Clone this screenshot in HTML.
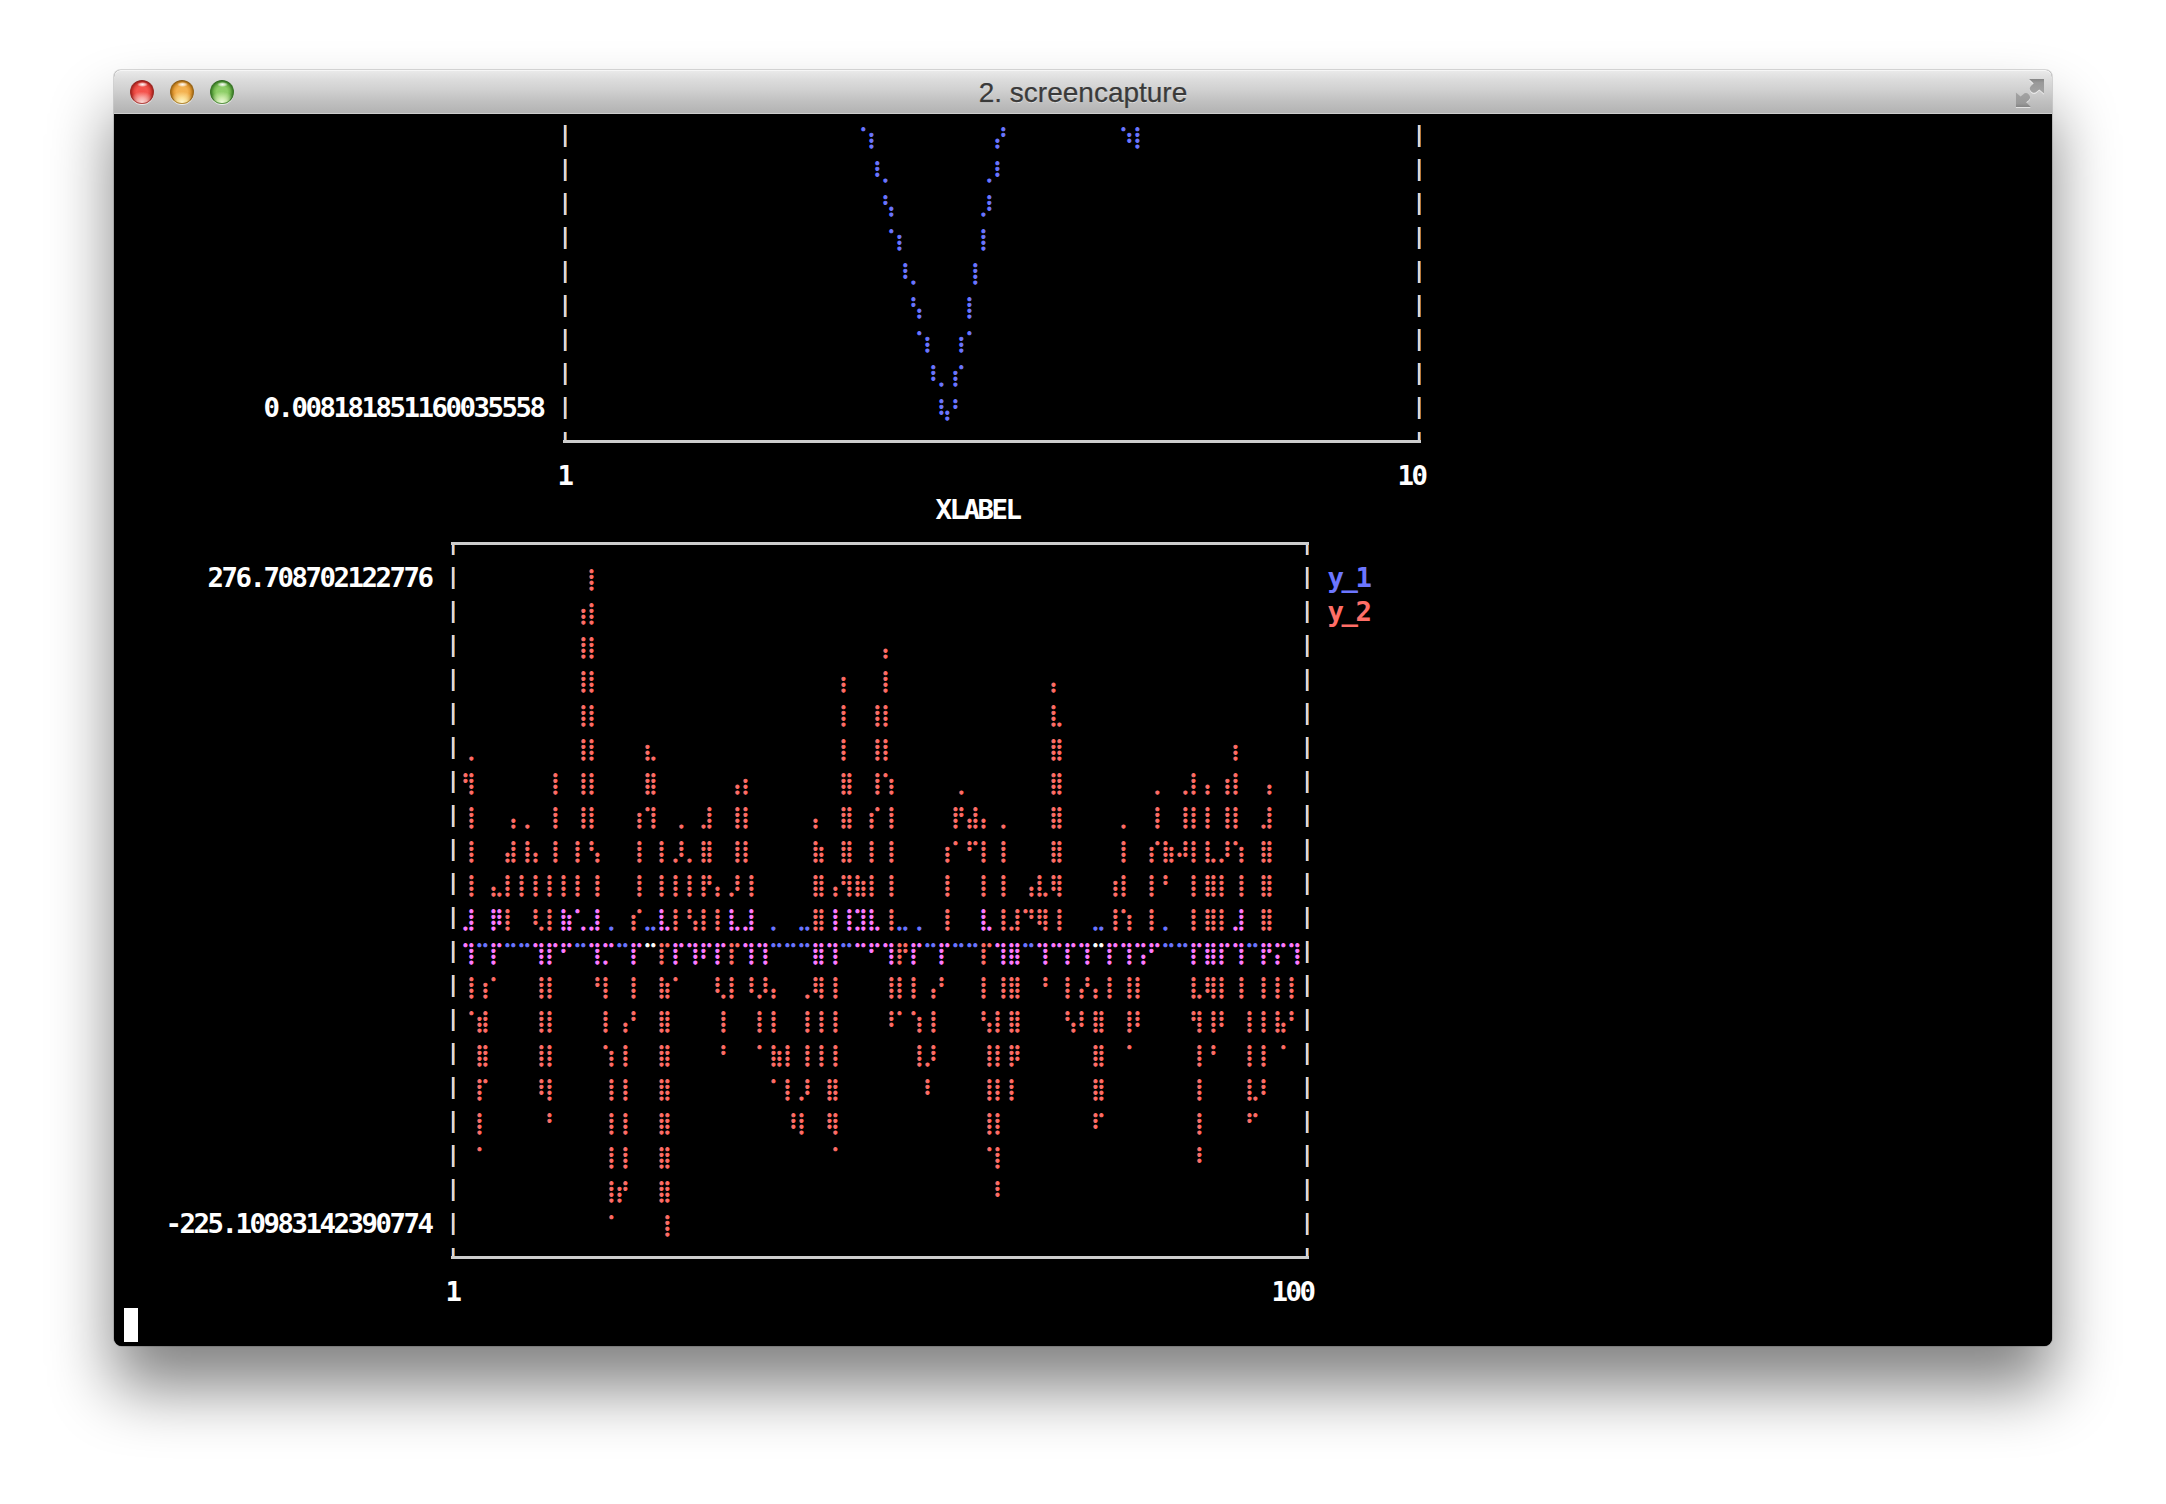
<!DOCTYPE html>
<html lang="en"><head><meta charset="utf-8"><title>2. screencapture</title>
<style>
html,body{margin:0;padding:0;background:#fff;}
body{width:2166px;height:1504px;position:relative;overflow:hidden;}
#win{position:absolute;left:114px;top:70px;width:1938px;height:1276px;border-radius:7px 7px 8px 8px;
 box-shadow:0 0 0 1px rgba(0,0,0,.14),0 42px 64px rgba(0,0,0,.49);background:#000;}
#bar{position:absolute;left:0;top:0;width:1938px;height:44px;border-radius:7px 7px 0 0;
 background:linear-gradient(#ebebeb 0,#e4e4e4 10%,#dcdcdc 22%,#d0d0d0 46%,#c1c1c1 70%,#b5b5b5 93%,#b3b3b3 97.6%,#cecece 97.8%,#cecece 100%);box-shadow:inset 0 1px 0 #f6f6f6;}
#title{position:absolute;left:0;top:0.6px;width:1938px;height:44px;line-height:44px;text-align:center;
 font-family:"Liberation Sans",sans-serif;font-size:28px;color:#3a3a3a;-webkit-text-stroke:0.25px #3a3a3a;text-shadow:0 1px 0 rgba(255,255,255,.55);}
.tl{position:absolute;top:10px;width:24px;height:24px;border-radius:50%;box-sizing:border-box;box-shadow:0 1px 0.5px rgba(255,255,255,.7);border:1px solid #000;background-clip:padding-box;}
.tl:after{content:"";position:absolute;left:5.5px;top:1px;width:11px;height:5px;border-radius:50%;background:radial-gradient(ellipse closest-side at 50% 50%,rgba(255,255,255,.95) 0,rgba(255,255,255,.6) 50%,rgba(255,255,255,0) 100%);}
#tl1{left:16px;border-color:#8f211c #9d2a25 #b44540;background:radial-gradient(ellipse 58% 48% at 50% 96%,#fbd6d4 0,rgba(251,196,192,.8) 40%,rgba(248,120,112,0) 100%),radial-gradient(circle closest-side at 50% 50%,#f5524b 0,#f4564f 50%,#e3453e 74%,#bd2d27 92%,#a3231e 100%);}
#tl2{left:56px;border-color:#8c5a12 #9a661a #b58a34;background:radial-gradient(ellipse 58% 48% at 50% 96%,#fff6cc 0,rgba(254,234,166,.85) 40%,rgba(250,190,90,0) 100%),radial-gradient(circle closest-side at 50% 50%,#f4b352 0,#f3b150 50%,#e49c38 74%,#bd7c1e 92%,#a36a16 100%);}
#tl3{left:96px;border-color:#2f6a1f #3a7628 #5a9645;background:radial-gradient(ellipse 58% 48% at 50% 96%,#eefbdc 0,rgba(216,243,184,.85) 40%,rgba(150,210,110,0) 100%),radial-gradient(circle closest-side at 50% 50%,#90d06a 0,#8dcd67 50%,#72b64e 74%,#4a8e32 92%,#3c7c28 100%);}
#term{position:absolute;left:0;top:44px;width:1938px;height:1232px;background:#000;border-radius:0 0 8px 8px;overflow:hidden;}
.t{position:absolute;height:34px;line-height:34px;white-space:pre;color:#fff;font-family:"DejaVu Sans Mono","Liberation Mono",monospace;font-weight:bold;font-size:27.4px;letter-spacing:-2.49px;margin-left:-0.4px;margin-top:0.5px;}
.hl{position:absolute;height:3px;background:#cdcdcd;}
.vl{position:absolute;width:2px;background:#d6dada;box-shadow:-1px 0 0 #0b2b60,1px 0 0 #b9793a;}
</style></head><body>
<div id="win">
<div id="bar"></div>
<div class="tl" id="tl1"></div>
<div class="tl" id="tl2"></div>
<div class="tl" id="tl3"></div>
<div id="title">2. screencapture</div>
<div id="term">
<div class="t" style="left:150px;top:276px;">0.008181851160035558</div>
<div class="t" style="left:444px;top:344px;">1</div>
<div class="t" style="left:1284px;top:344px;">10</div>
<div class="t" style="left:822px;top:378px;">XLABEL</div>
<div class="t" style="left:94px;top:446px;">276.708702122776</div>
<div class="t" style="left:1214px;top:446px;color:#6c76ff;">y_1</div>
<div class="t" style="left:1214px;top:480px;color:#ff6e67;">y_2</div>
<div class="t" style="left:52px;top:1092px;">-225.10983142390774</div>
<div class="t" style="left:332px;top:1160px;">1</div>
<div class="t" style="left:1158px;top:1160px;">100</div>
<div class="vl" style="left:450px;top:317.7px;height:11.3px"></div><div class="vl" style="left:1304px;top:317.7px;height:11.3px"></div><div class="hl" style="left:449px;top:326px;width:858px"></div><div class="vl" style="left:450px;top:11px;height:21.8px"></div><div class="vl" style="left:1304px;top:11px;height:21.8px"></div><div class="vl" style="left:450px;top:45px;height:21.8px"></div><div class="vl" style="left:1304px;top:45px;height:21.8px"></div><div class="vl" style="left:450px;top:79px;height:21.8px"></div><div class="vl" style="left:1304px;top:79px;height:21.8px"></div><div class="vl" style="left:450px;top:113px;height:21.8px"></div><div class="vl" style="left:1304px;top:113px;height:21.8px"></div><div class="vl" style="left:450px;top:147px;height:21.8px"></div><div class="vl" style="left:1304px;top:147px;height:21.8px"></div><div class="vl" style="left:450px;top:181px;height:21.8px"></div><div class="vl" style="left:1304px;top:181px;height:21.8px"></div><div class="vl" style="left:450px;top:215px;height:21.8px"></div><div class="vl" style="left:1304px;top:215px;height:21.8px"></div><div class="vl" style="left:450px;top:249px;height:21.8px"></div><div class="vl" style="left:1304px;top:249px;height:21.8px"></div><div class="vl" style="left:450px;top:283px;height:21.8px"></div><div class="vl" style="left:1304px;top:283px;height:21.8px"></div>
<div class="vl" style="left:338px;top:428px;height:13px"></div><div class="vl" style="left:1192px;top:428px;height:13px"></div><div class="hl" style="left:337px;top:428px;width:858px"></div><div class="vl" style="left:338px;top:1133.7px;height:11.3px"></div><div class="vl" style="left:1192px;top:1133.7px;height:11.3px"></div><div class="hl" style="left:337px;top:1142px;width:858px"></div><div class="vl" style="left:338px;top:453px;height:21.8px"></div><div class="vl" style="left:1192px;top:453px;height:21.8px"></div><div class="vl" style="left:338px;top:487px;height:21.8px"></div><div class="vl" style="left:1192px;top:487px;height:21.8px"></div><div class="vl" style="left:338px;top:521px;height:21.8px"></div><div class="vl" style="left:1192px;top:521px;height:21.8px"></div><div class="vl" style="left:338px;top:555px;height:21.8px"></div><div class="vl" style="left:1192px;top:555px;height:21.8px"></div><div class="vl" style="left:338px;top:589px;height:21.8px"></div><div class="vl" style="left:1192px;top:589px;height:21.8px"></div><div class="vl" style="left:338px;top:623px;height:21.8px"></div><div class="vl" style="left:1192px;top:623px;height:21.8px"></div><div class="vl" style="left:338px;top:657px;height:21.8px"></div><div class="vl" style="left:1192px;top:657px;height:21.8px"></div><div class="vl" style="left:338px;top:691px;height:21.8px"></div><div class="vl" style="left:1192px;top:691px;height:21.8px"></div><div class="vl" style="left:338px;top:725px;height:21.8px"></div><div class="vl" style="left:1192px;top:725px;height:21.8px"></div><div class="vl" style="left:338px;top:759px;height:21.8px"></div><div class="vl" style="left:1192px;top:759px;height:21.8px"></div><div class="vl" style="left:338px;top:793px;height:21.8px"></div><div class="vl" style="left:1192px;top:793px;height:21.8px"></div><div class="vl" style="left:338px;top:827px;height:21.8px"></div><div class="vl" style="left:1192px;top:827px;height:21.8px"></div><div class="vl" style="left:338px;top:861px;height:21.8px"></div><div class="vl" style="left:1192px;top:861px;height:21.8px"></div><div class="vl" style="left:338px;top:895px;height:21.8px"></div><div class="vl" style="left:1192px;top:895px;height:21.8px"></div><div class="vl" style="left:338px;top:929px;height:21.8px"></div><div class="vl" style="left:1192px;top:929px;height:21.8px"></div><div class="vl" style="left:338px;top:963px;height:21.8px"></div><div class="vl" style="left:1192px;top:963px;height:21.8px"></div><div class="vl" style="left:338px;top:997px;height:21.8px"></div><div class="vl" style="left:1192px;top:997px;height:21.8px"></div><div class="vl" style="left:338px;top:1031px;height:21.8px"></div><div class="vl" style="left:1192px;top:1031px;height:21.8px"></div><div class="vl" style="left:338px;top:1065px;height:21.8px"></div><div class="vl" style="left:1192px;top:1065px;height:21.8px"></div><div class="vl" style="left:338px;top:1099px;height:21.8px"></div><div class="vl" style="left:1192px;top:1099px;height:21.8px"></div>
<svg id="plots" width="1938" height="1232" style="position:absolute;left:0;top:0" font-family="DejaVu Serif, DejaVu Sans, serif" font-size="20" stroke-width="0.9" stroke-linejoin="round"><g transform="scale(1.005,1.052)">
<text x="735.32 749.25 874.63 1000.00 1013.93" y="28.61" fill="#6c76ff" stroke="#6c76ff">⠈⡆⡜⠱⡇</text>
<text x="749.25 763.18 860.70 874.63" y="60.93" fill="#6c76ff" stroke="#6c76ff">⠸⡀⢀⠇</text>
<text x="763.18 860.70" y="93.25" fill="#6c76ff" stroke="#6c76ff">⢣⡸</text>
<text x="763.18 777.11 860.70" y="125.57" fill="#6c76ff" stroke="#6c76ff">⠈⡆⡇</text>
<text x="777.11 791.04 846.77" y="157.89" fill="#6c76ff" stroke="#6c76ff">⠸⡀⢸</text>
<text x="791.04 846.77" y="190.21" fill="#6c76ff" stroke="#6c76ff">⢣⡇</text>
<text x="791.04 804.98 832.84 846.77" y="222.53" fill="#6c76ff" stroke="#6c76ff">⠈⡆⢰⠁</text>
<text x="804.98 818.91 832.84" y="254.85" fill="#6c76ff" stroke="#6c76ff">⠸⡀⡎</text>
<text x="818.91 832.84" y="287.17" fill="#6c76ff" stroke="#6c76ff">⢧⠃</text>
<text x="470.65" y="448.76" fill="#ff6e67" stroke="#ff6e67">⡇</text>
<text x="456.72 470.65" y="481.08" fill="#ff6e67" stroke="#ff6e67">⢰⡇</text>
<text x="456.72 470.65 763.18" y="513.40" fill="#ff6e67" stroke="#ff6e67">⢸⡇⡄</text>
<text x="456.72 470.65 721.39 763.18 930.35" y="545.72" fill="#ff6e67" stroke="#ff6e67">⢸⡇⡆⡇⡄</text>
<text x="456.72 470.65 721.39 749.25 763.18 930.35" y="578.04" fill="#ff6e67" stroke="#ff6e67">⢸⡇⡇⢸⡇⣇</text>
<text x="345.27 456.72 470.65 526.37 721.39 749.25 763.18 930.35 1111.44" y="610.36" fill="#ff6e67" stroke="#ff6e67">⢀⢸⡇⣆⡇⢸⡇⣿⡆</text>
<text x="345.27 428.86 456.72 470.65 526.37 609.95 623.88 721.39 749.25 763.18 832.84 930.35 1027.86 1055.72 1069.65 1083.58 1097.51 1111.44 1139.30" y="642.68" fill="#ff6e67" stroke="#ff6e67">⢻⢸⢸⡇⣿⢠⡆⣿⢸⢱⢀⣿⢀⢀⡇⡄⢰⡇⢠</text>
<text x="345.27 387.06 401.00 428.86 456.72 470.65 512.44 526.37 554.23 582.09 609.95 623.88 693.53 721.39 749.25 763.18 832.84 846.77 860.70 874.63 930.35 1000.00 1027.86 1055.72 1069.65 1083.58 1097.51 1111.44 1139.30" y="675.00" fill="#ff6e67" stroke="#ff6e67">⢸⢠⢀⢸⢸⡇⢰⢹⢀⣸⢸⡇⡄⣿⡎⢸⡟⣼⡄⢀⣿⡀⢸⢸⡇⡇⢸⡇⣸</text>
<text x="345.27 387.06 401.00 414.93 428.86 456.72 470.65 512.44 540.30 554.23 568.16 582.09 609.95 623.88 693.53 721.39 749.25 763.18 818.91 832.84 846.77 860.70 874.63 930.35 1000.00 1027.86 1041.79 1055.72 1069.65 1083.58 1097.51 1111.44 1139.30" y="707.32" fill="#ff6e67" stroke="#ff6e67">⢸⣼⢸⡄⢸⡇⢣⢸⡇⡸⡀⣿⢸⡇⣷⣿⡇⢸⢰⠁⠋⡇⢸⣿⡇⡎⣷⠼⡇⣇⡸⢱⣿</text>
<text x="345.27 373.13 387.06 401.00 414.93 428.86 442.79 456.72 470.65 512.44 540.30 554.23 568.16 582.09 596.02 609.95 623.88 693.53 707.46 721.39 735.32 749.25 763.18 818.91 860.70 874.63 902.49 916.42 930.35 986.07 1000.00 1027.86 1041.79 1069.65 1083.58 1097.51 1111.44 1139.30" y="739.64" fill="#ff6e67" stroke="#ff6e67">⢸⣄⡇⡇⡇⡇⡇⡇⢸⢸⡇⡇⡇⡟⡄⡸⢸⣿⢠⢻⣷⡇⢸⢸⡇⢸⢠⣇⢿⢰⡇⡇⠃⡇⣿⡇⢸⣿</text>
<text x="484.58 526.37 651.74 679.60 777.11 791.04 972.14 1041.79" y="771.96" fill="#6c76ff" stroke="#6c76ff">⢀⣀⡀⣀⣀⢀⣀⡀</text>
<text x="345.27 373.13 442.79 456.72 470.65 540.30 609.95 623.88 707.46 721.39 735.32 749.25 860.70 1111.44" y="771.96" fill="#ff7cff" stroke="#ff7cff">⣸⡿⣷⢁⣸⣇⣇⣸⢸⢸⣹⣇⣇⣸</text>
<text x="387.06 414.93 428.86 512.44 554.23 568.16 582.09 596.02 693.53 763.18 818.91 874.63 888.56 902.49 916.42 930.35 986.07 1000.00 1027.86 1069.65 1083.58 1097.51 1139.30" y="771.96" fill="#ff6e67" stroke="#ff6e67">⡇⢇⡇⡎⡇⢣⡇⡇⣿⢸⢸⢸⣸⠙⢿⢸⢸⢱⡇⡇⣿⡇⣿</text>
<text x="359.20 387.06 401.00 456.72 498.51 651.74 665.67 679.60 721.39 804.98 832.84 846.77 902.49 1041.79 1055.72 1125.37" y="804.28" fill="#6c76ff" stroke="#6c76ff">⠉⠉⠉⠉⠉⠉⠉⠉⠉⠉⠉⠉⠉⠉⠉⠉</text>
<text x="345.27 373.13 414.93 428.86 442.79 470.65 484.58 512.44 554.23 568.16 582.09 596.02 623.88 637.81 693.53 707.46 735.32 749.25 763.18 791.04 818.91 874.63 888.56 916.42 930.35 944.28 958.21 986.07 1000.00 1013.93 1027.86 1069.65 1083.58 1097.51 1111.44 1139.30 1153.23 1167.16" y="804.28" fill="#ff7cff" stroke="#ff7cff">⢹⡏⢹⡏⠋⢹⡉⡏⡏⢹⠏⡏⢹⢹⣿⢹⠉⠋⢹⡏⡏⢹⣿⢹⠉⡏⢹⡏⢹⢩⠋⡏⣿⡏⢹⡟⡍⢹</text>
<text x="540.30 609.95 777.11 860.70" y="804.28" fill="#ff6e67" stroke="#ff6e67">⡏⡏⡟⡏</text>
<text x="526.37 972.14" y="804.28" fill="#ffffff" stroke="#ffffff">⠉⠉</text>
<text x="345.27 359.20 373.13 414.93 428.86 470.65 484.58 512.44 540.30 554.23 596.02 609.95 623.88 637.81 651.74 679.60 693.53 707.46 763.18 777.11 791.04 804.98 818.91 860.70 874.63 888.56 916.42 944.28 958.21 972.14 986.07 1000.00 1013.93 1069.65 1083.58 1097.51 1111.44 1139.30 1153.23 1167.16" y="836.60" fill="#ff6e67" stroke="#ff6e67">⢸⢰⠁⢸⡇⠘⡇⡇⣷⠁⢇⡇⠸⡸⡄⢀⢿⢸⢸⡇⡇⢠⠃⡇⢸⣿⠘⡇⡜⡄⡇⢸⡇⣇⢿⡇⢸⡇⡇⡇</text>
<text x="345.27 359.20 414.93 428.86 484.58 498.51 512.44 540.30 596.02 637.81 651.74 679.60 693.53 707.46 763.18 777.11 791.04 804.98 860.70 874.63 888.56 944.28 958.21 972.14 1000.00 1013.93 1069.65 1083.58 1097.51 1125.37 1139.30 1153.23 1167.16" y="868.92" fill="#ff6e67" stroke="#ff6e67">⠈⣾⢸⡇⡇⢠⠃⣿⢸⡇⡇⢸⢸⢸⠸⠁⢱⢸⢣⡇⣿⢣⠇⣿⢸⠇⢻⢸⠇⡇⡇⣧⠃</text>
<text x="359.20 414.93 428.86 484.58 498.51 540.30 596.02 637.81 651.74 665.67 679.60 693.53 707.46 791.04 804.98 860.70 874.63 888.56 972.14 1000.00 1069.65 1083.58 1125.37 1139.30 1153.23" y="901.24" fill="#ff6e67" stroke="#ff6e67">⣿⢸⡇⢱⢸⣿⠘⠁⣷⡇⢸⢸⢸⢸⡸⢸⡇⡿⣿⠈⢸⠘⡇⡇⠈</text>
<text x="359.20 414.93 428.86 484.58 498.51 540.30 651.74 665.67 679.60 707.46 804.98 860.70 874.63 888.56 972.14 1069.65 1125.37 1139.30" y="933.56" fill="#ff6e67" stroke="#ff6e67">⡏⠸⡇⢸⢸⣿⠁⡇⡸⣿⠇⢸⡇⡇⣿⢸⣇⠇</text>
<text x="359.20 428.86 484.58 498.51 540.30 665.67 679.60 707.46 860.70 874.63 972.14 1069.65 1125.37" y="965.87" fill="#ff6e67" stroke="#ff6e67">⡇⠃⢸⢸⣿⠸⡇⢿⢸⡇⠏⢸⠋</text>
<text x="359.20 484.58 498.51 540.30 707.46 860.70 874.63 1069.65" y="998.19" fill="#ff6e67" stroke="#ff6e67">⠁⢸⢸⣿⠈⠈⡇⠸</text>
<text x="484.58 498.51 540.30 874.63" y="1030.51" fill="#ff6e67" stroke="#ff6e67">⢸⡞⣿⠇</text>
<text x="484.58 540.30" y="1062.83" fill="#ff6e67" stroke="#ff6e67">⠈⢸</text>
</g></svg>
<div style="position:absolute;left:10px;top:1194px;width:14px;height:34px;background:#fff"></div>
</div>
<svg style="position:absolute;left:0;top:0" width="1938" height="44" viewBox="0 0 1938 44">
<defs><linearGradient id="fsg" x1="0" y1="0" x2="0" y2="1"><stop offset="0" stop-color="#858585"/><stop offset="0.25" stop-color="#999999"/><stop offset="1" stop-color="#a3a3a3"/></linearGradient></defs>
<g fill="rgba(255,255,255,.6)" transform="translate(0,1.2)"><path d="M1915.1 9 L1930 9 L1930 23.5 L1925.3 19.4 L1922.83 21.43 A4 4 0 0 1 1917.17 15.77 L1919.7 13.6 Z"/><path d="M1915.1 9 L1930 9 L1930 23.5 L1925.3 19.4 L1922.83 21.43 A4 4 0 0 1 1917.17 15.77 L1919.7 13.6 Z" transform="rotate(180 1915.95 22.95)"/></g>
<g fill="url(#fsg)"><path d="M1915.1 9 L1930 9 L1930 23.5 L1925.3 19.4 L1922.83 21.43 A4 4 0 0 1 1917.17 15.77 L1919.7 13.6 Z"/><path d="M1915.1 9 L1930 9 L1930 23.5 L1925.3 19.4 L1922.83 21.43 A4 4 0 0 1 1917.17 15.77 L1919.7 13.6 Z" transform="rotate(180 1915.95 22.95)"/></g>
</svg>
</div>
</body></html>
